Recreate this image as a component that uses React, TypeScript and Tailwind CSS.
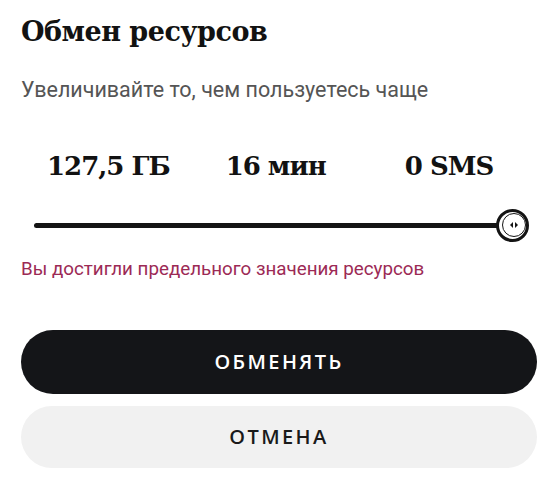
import * as React from 'react';

const slab = { fontFamily: '"DejaVu Serif", "Liberation Serif", serif' };
const openSans = { fontFamily: '"Open Sans", "Liberation Sans", sans-serif' };

const App: React.FC = () => {
  return (
    <div className="w-[558px] h-[477px] bg-white overflow-hidden px-[21px] pt-[15px]" style={{ fontFamily: 'Roboto, "Liberation Sans", sans-serif' }}>
      <h1 className="text-[27px] leading-[34px] font-bold text-[#121212] tracking-[-0.5px]" style={slab}>
        Обмен ресурсов
      </h1>
      <p className="mt-[28px] text-[21.5px] leading-[26px] text-[#555555]">Увеличивайте то, чем пользуетесь чаще</p>

      {/* resource amounts */}
      <div className="mt-[47px] flex items-center pl-[26px] text-[26px] leading-[32px] font-bold text-[#121212] tracking-[-1px]" style={slab}>
        <span>127,5 ГБ</span>
        <span className="ml-[56px]">16 мин</span>
        <span className="ml-[79px]">0 SMS</span>
      </div>

      {/* slider, thumb at max */}
      <div className="mt-[26px] h-[34px] ml-[13px] mr-[8px] flex items-center">
        <div className="h-[5px] flex-1 rounded-full bg-[#141414]" />
        <div className="-ml-[4px] w-[33px] h-[33px] rounded-full border-[3px] border-[#141414] bg-white flex items-center justify-center">
          <div className="w-[24px] h-[24px] ml-[2px] rounded-full border-[1.5px] border-[#141414] bg-white flex items-center justify-center">
            <svg width="10" height="6" viewBox="0 0 10 6">
              <polygon points="4,0 4,6 1,3" fill="#141414" />
              <polygon points="6,0 6,6 9,3" fill="#141414" />
            </svg>
          </div>
        </div>
      </div>

      <p className="mt-[16px] text-[18.8px] leading-[22px] text-[#9c2a55]">Вы достигли предельного значения ресурсов</p>

      <button className="mt-[50px] w-full h-[64px] rounded-full bg-[#141518] text-white text-[20px] font-semibold tracking-[0.12em]" style={openSans}>
        ОБМЕНЯТЬ
      </button>
      <button className="mt-[12px] w-full h-[62px] rounded-full bg-[#f1f1f1] text-[#1a1a1a] text-[20px] font-semibold tracking-[0.12em]" style={openSans}>
        ОТМЕНА
      </button>
    </div>
  );
};

export default App;
